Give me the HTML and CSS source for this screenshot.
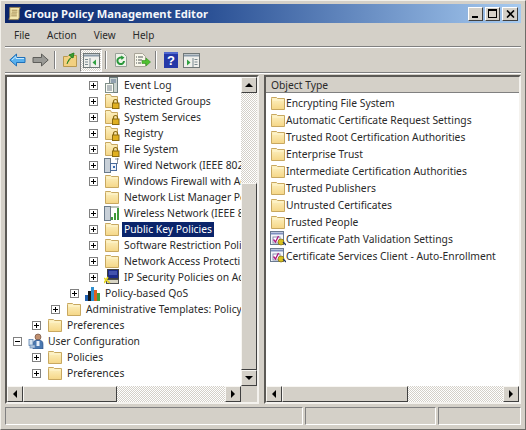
FILE: index.html
```html
<!DOCTYPE html>
<html lang="en">
<head>
<meta charset="utf-8">
<title>Group Policy Management Editor</title>
<link rel="stylesheet" href="styles.css">
</head>
<body>
<svg class="defs" width="0" height="0" aria-hidden="true">
  <defs>
    <linearGradient id="fg" x1="0" y1="0" x2="0" y2="1"><stop offset="0" stop-color="#fdf2c4"/><stop offset="1" stop-color="#f5d686"/></linearGradient>
    <symbol id="folder" viewBox="0 0 16 16">
      <path d="M1.5 3.5V2.5h5l1 1h7v11h-13z" fill="url(#fg)" stroke="#c8a860"/>
      <path d="M2.5 5h11" stroke="#fff6d0"/>
    </symbol>
    <symbol id="lockfolder" viewBox="0 0 16 16">
      <path d="M1.500 3.500V1.500h5l1 2h6v11h-12z" fill="url(#fg)" stroke="#c8a860"/>
      <path d="M9.500 10V8.500a2 2 0 0 1 4 0V10" fill="none" stroke="#8a6a10" stroke-width="1.200"/>
      <rect x="8.500" y="10" width="6.500" height="5.500" fill="#e0b020" stroke="#8a6a10"/>
    </symbol>
    <symbol id="log" viewBox="0 0 16 16">
      <rect x="5.5" y="0.5" width="8" height="15" fill="#c9d2cf" stroke="#6f7f80"/>
      <path d="M7 3h5M7 5h5" stroke="#5a7090"/>
      <rect x="1.5" y="6.5" width="8" height="9" fill="#fbfbf5" stroke="#7f8f88"/>
      <path d="M3 9h5M3 11h5M3 13h5" stroke="#70808a"/>
    </symbol>
    <symbol id="wired" viewBox="0 0 16 16">
      <rect x="0.5" y="1.5" width="6" height="14" fill="#c8d0d8" stroke="#6a7a8a"/>
      <rect x="6.5" y="6.5" width="6" height="7" fill="#eef2f8" stroke="#4a6a9a"/>
      <path d="M9 9h2v2H9z" fill="#3a6ab0"/>
      <path d="M13.5 1v6M11 2h4" stroke="#8a9098"/>
    </symbol>
    <symbol id="wireless" viewBox="0 0 16 16">
      <rect x="0.5" y="1.5" width="6" height="14" fill="#c8d0d8" stroke="#6a7a8a"/>
      <path d="M7 15h2v-3H7zM10 15h2V8h-2zM13 15h2V3h-2z" fill="#3f9a3a"/>
      <path d="M6 2h9" stroke="#7a8a7a"/>
    </symbol>
    <symbol id="ipsec" viewBox="0 0 16 16">
      <rect x="3.5" y="0.5" width="11" height="9" fill="#1c2a8a" stroke="#404040"/>
      <path d="M5 3h8M5 5h8" stroke="#6a7ad0"/>
      <rect x="2.5" y="10.5" width="12" height="4" fill="#d8d4c4" stroke="#505050"/>
      <path d="M0 9l6 5M0 14l4-6" stroke="#e8d820" stroke-width="1.6"/>
    </symbol>
    <symbol id="qos" viewBox="0 0 16 16">
      <rect x="0" y="10" width="3" height="6" fill="#2060b0"/>
      <rect x="3" y="6" width="3" height="10" fill="#181818"/>
      <rect x="6" y="2" width="3" height="14" fill="#3090d0"/>
      <rect x="9" y="5" width="3" height="11" fill="#e06020"/>
      <rect x="12" y="8" width="3" height="8" fill="#40a040"/>
    </symbol>
    <symbol id="user" viewBox="0 0 16 16">
      <circle cx="10" cy="4" r="3" fill="#c09070" stroke="#604030" stroke-width=".6"/>
      <path d="M5 16v-5c0-3 2-4 5-4s5 1 5 4v5z" fill="#4a78b0" stroke="#2a4a80" stroke-width=".6"/>
      <rect x="8.5" y="8" width="3" height="5" fill="#e8eef8"/>
      <rect x="1" y="6.5" width="4" height="6" fill="#d8e4f0" stroke="#5a80b0" stroke-width=".8"/>
      <rect x="2" y="12" width="5" height="3" fill="#b0c4dc" stroke="#5a80b0" stroke-width=".6"/>
    </symbol>
    <symbol id="cert" viewBox="0 0 16 16">
      <rect x="0.5" y="0.5" width="13" height="13" fill="#f4f6fa" stroke="#6a7a90"/>
      <path d="M1 2.500h12" stroke="#7f90c0" stroke-width="2"/>
      <rect x="3" y="6" width="7" height="6" fill="#fff" stroke="#8a90b0"/>
      <path d="M3.5 8.500l2 2.500 3-6" fill="none" stroke="#b01880" stroke-width="1.3"/>
      <circle cx="11" cy="11" r="3" fill="#d8c020" stroke="#806a10" stroke-width=".7"/>
      <path d="M13 11l3 3" stroke="#203060" stroke-width="1.3"/>
    </symbol>
  </defs>
</svg>

<div class="window">
  <header class="titlebar">
    <svg class="appicon" viewBox="0 0 16 16" width="15" height="15" aria-hidden="true">
      <path d="M3 1.500h11l-1 3v8l-1 2H2l1-3z" fill="#f4e8b0" stroke="#9a8450"/>
      <path d="M5 4.500h6M5 6.500h6M4.500 8.500h6M4.500 10.500h6" stroke="#a08850"/>
    </svg>
    <span class="title">Group Policy Management Editor</span>
    <div class="winbtns">
      <span class="winbtn"><i class="glyph-min"></i></span>
      <span class="winbtn"><i class="glyph-max"></i></span>
      <span class="winbtn winbtn-close">
        <svg viewBox="0 0 9 8" width="9" height="8" aria-hidden="true"><path d="M1 0.500l7 7M8 0.500l-7 7" stroke="#000" stroke-width="1.6"/></svg>
      </span>
    </div>
  </header>

  <nav class="menubar">
    <span class="menuitem">File</span>
    <span class="menuitem">Action</span>
    <span class="menuitem">View</span>
    <span class="menuitem">Help</span>
  </nav>

  <div class="toolbar">
    <span class="tool tool-first">
      <svg viewBox="0 0 17 14" width="17" height="14" aria-hidden="true"><path d="M0.800 7L7.500 1v3.500h8.500v5H7.500V13z" fill="#58b0ee" stroke="#2070b8"/><path d="M3 7l4-3.500v2h8" fill="none" stroke="#c4e8ff"/></svg>
    </span>
    <span class="tool">
      <svg viewBox="0 0 17 14" width="17" height="14" aria-hidden="true"><path d="M16.200 7L9.500 1v3.500H1v5h8.500V13z" fill="#9a9a96" stroke="#5e5e5a"/></svg>
    </span>
    <span class="toolsep"></span>
    <span class="tool">
      <svg viewBox="0 0 16 16" width="16" height="16" aria-hidden="true"><path d="M1.500 4.500h4l1-1h8v11h-13z" fill="#f2d080" stroke="#b89850"/><path d="M5 12c1-4 3-6 5-7M7 3l5-2-1 5z" fill="#3aa030" stroke="#2a8024"/></svg>
    </span>
    <span class="tool tool-pressed">
      <svg viewBox="0 0 17 15" width="17" height="15" aria-hidden="true"><rect x="0.500" y="0.500" width="16" height="14" fill="#f0f0ec" stroke="#707878"/><path d="M1 2.500h15" stroke="#8a9aa8" stroke-width="2"/><path d="M7 5v9M2 6.500h3M2 9h3M2 11.500h3" stroke="#7a8a90"/><path d="M13 6.500v6L9.500 9.500z" fill="#30a040"/></svg>
    </span>
    <span class="toolsep"></span>
    <span class="tool">
      <svg viewBox="0 0 16 16" width="16" height="16" aria-hidden="true"><path d="M2.500 1.500h8l3 3v10h-11z" fill="#eef2e8" stroke="#98a098"/><path d="M11 9a3.300 3.300 0 1 1-1.500-3" fill="none" stroke="#28983a" stroke-width="2"/><path d="M8 3.500l3.500 2-3 2.500z" fill="#28983a"/></svg>
    </span>
    <span class="tool">
      <svg viewBox="0 0 18 16" width="18" height="16" aria-hidden="true"><path d="M1.500 1.500h8l3 3v10h-11z" fill="#f8f6ea" stroke="#a8a498"/><path d="M3 5h1M5 5h5M3 8h1M5 8h4M3 11h1M5 11h3" stroke="#505858"/><path d="M9 8.500h4V6l4.500 4-4.500 4v-2.500H9z" fill="#50c030" stroke="#309020" stroke-width=".6"/></svg>
    </span>
    <span class="toolsep"></span>
    <span class="tool">
      <svg viewBox="0 0 14 16" width="14" height="16" aria-hidden="true"><rect width="14" height="16" fill="#2438a8"/><rect x="0" y="0" width="14" height="2" fill="#5068d0"/><text x="7" y="13" class="helpq">?</text></svg>
    </span>
    <span class="tool">
      <svg viewBox="0 0 17 15" width="17" height="15" aria-hidden="true"><rect x="0.500" y="0.500" width="16" height="14" fill="#f0f0ec" stroke="#707878"/><path d="M1 2.500h15" stroke="#8a9aa8" stroke-width="2"/><path d="M10 5v9M11.500 6.500h3M11.500 9h3M11.500 11.500h3" stroke="#7a8a90"/><path d="M4 6.500v6L7.500 9.500z" fill="#30a040"/></svg>
    </span>
  </div>

  <main class="panes">
    <section class="pane pane-tree">
      <div class="pane-body">
        <ul class="tree">
          <li class="row l3"><span class="exp"></span><svg class="ic"><use href="#log"/></svg><span class="lbl">Event Log</span></li>
          <li class="row l3"><span class="exp"></span><svg class="ic"><use href="#lockfolder"/></svg><span class="lbl">Restricted Groups</span></li>
          <li class="row l3"><span class="exp"></span><svg class="ic"><use href="#lockfolder"/></svg><span class="lbl">System Services</span></li>
          <li class="row l3"><span class="exp"></span><svg class="ic"><use href="#lockfolder"/></svg><span class="lbl">Registry</span></li>
          <li class="row l3"><span class="exp"></span><svg class="ic"><use href="#lockfolder"/></svg><span class="lbl">File System</span></li>
          <li class="row l3"><span class="exp"></span><svg class="ic"><use href="#wired"/></svg><span class="lbl">Wired Network (IEEE 802</span></li>
          <li class="row l3"><span class="exp"></span><svg class="ic"><use href="#folder"/></svg><span class="lbl">Windows Firewall with Ad</span></li>
          <li class="row l3"><span class="exp exp-none"></span><svg class="ic"><use href="#folder"/></svg><span class="lbl">Network List Manager Po</span></li>
          <li class="row l3"><span class="exp"></span><svg class="ic"><use href="#wireless"/></svg><span class="lbl">Wireless Network (IEEE 8</span></li>
          <li class="row l3"><span class="exp"></span><svg class="ic"><use href="#folder"/></svg><span class="lbl lbl-sel">Public Key Policies</span></li>
          <li class="row l3"><span class="exp"></span><svg class="ic"><use href="#folder"/></svg><span class="lbl">Software Restriction Poli</span></li>
          <li class="row l3"><span class="exp"></span><svg class="ic"><use href="#folder"/></svg><span class="lbl">Network Access Protecti</span></li>
          <li class="row l3"><span class="exp"></span><svg class="ic"><use href="#ipsec"/></svg><span class="lbl">IP Security Policies on Ac</span></li>
          <li class="row l2"><span class="exp"></span><svg class="ic"><use href="#qos"/></svg><span class="lbl">Policy-based QoS</span></li>
          <li class="row l1"><span class="exp"></span><svg class="ic"><use href="#folder"/></svg><span class="lbl">Administrative Templates: Policy</span></li>
          <li class="row l0b"><span class="exp"></span><svg class="ic"><use href="#folder"/></svg><span class="lbl">Preferences</span></li>
          <li class="row l0"><span class="exp exp-open"></span><svg class="ic"><use href="#user"/></svg><span class="lbl">User Configuration</span></li>
          <li class="row l0b"><span class="exp"></span><svg class="ic"><use href="#folder"/></svg><span class="lbl">Policies</span></li>
          <li class="row l0b"><span class="exp"></span><svg class="ic"><use href="#folder"/></svg><span class="lbl">Preferences</span></li>
        </ul>
        <div class="vscroll">
          <span class="sbtn"><i class="arr arr-up"></i></span>
          <span class="strack strack-a"></span>
          <span class="sthumb sthumb-v"></span>
          <span class="sbtn"><i class="arr arr-down"></i></span>
        </div>
      </div>
      <div class="hscroll">
        <span class="sbtn"><i class="arr arr-left"></i></span>
        <span class="sthumb sthumb-h1"></span>
        <span class="strack"></span>
        <span class="sbtn"><i class="arr arr-right"></i></span>
        <span class="corner"></span>
      </div>
    </section>

    <section class="pane pane-list">
      <div class="listhead">Object Type</div>
      <ul class="list">
        <li class="item"><svg class="ic"><use href="#folder"/></svg><span>Encrypting File System</span></li>
        <li class="item"><svg class="ic"><use href="#folder"/></svg><span>Automatic Certificate Request Settings</span></li>
        <li class="item"><svg class="ic"><use href="#folder"/></svg><span>Trusted Root Certification Authorities</span></li>
        <li class="item"><svg class="ic"><use href="#folder"/></svg><span>Enterprise Trust</span></li>
        <li class="item"><svg class="ic"><use href="#folder"/></svg><span>Intermediate Certification Authorities</span></li>
        <li class="item"><svg class="ic"><use href="#folder"/></svg><span>Trusted Publishers</span></li>
        <li class="item"><svg class="ic"><use href="#folder"/></svg><span>Untrusted Certificates</span></li>
        <li class="item"><svg class="ic"><use href="#folder"/></svg><span>Trusted People</span></li>
        <li class="item"><svg class="ic"><use href="#cert"/></svg><span>Certificate Path Validation Settings</span></li>
        <li class="item"><svg class="ic"><use href="#cert"/></svg><span>Certificate Services Client - Auto-Enrollment</span></li>
      </ul>
      <div class="hscroll">
        <span class="sbtn"><i class="arr arr-left"></i></span>
        <span class="sthumb sthumb-h2"></span>
        <span class="strack"></span>
        <span class="sbtn"><i class="arr arr-right"></i></span>
      </div>
    </section>
  </main>

  <footer class="statusbar">
    <span class="cell cell-a"></span>
    <span class="cell cell-b"></span>
    <span class="cell cell-c"></span>
  </footer>
</div>
</body>
</html>
```

FILE: styles.css
```css
* { box-sizing: border-box; }
html, body { margin: 0; padding: 0; }
body {
  width: 526px;
  height: 430px;
  overflow: hidden;
  background: #d4d0c8;
  font-family: "Noto Sans", "DejaVu Sans", sans-serif;
  font-size: 10.3px;
  color: #2a2a2a;
}
.defs { position: absolute; }
ul { list-style: none; margin: 0; padding: 0; }

.window {
  width: 526px;
  height: 430px;
  padding: 3px 4px 4px;
  display: flex;
  flex-direction: column;
  border-top: 1px solid #f2f0ea;
  border-left: 1px solid #f2f0ea;
  border-right: 1px solid #6e6c68;
  border-bottom: 1px solid #6e6c68;
}

.titlebar {
  height: 19px;
  flex: none;
  display: flex;
  align-items: center;
  padding: 0 3px 0 2px;
  background: linear-gradient(90deg, #0a246a 0%, #2c5296 40%, #a6caf0 100%);
  color: #fff;
}
.appicon { flex: none; margin-right: 2px; }
.title { font-weight: 700; font-size: 11.2px; white-space: nowrap; color: #f4f6fa; }
.winbtns { margin-left: auto; display: flex; gap: 2px; }
.winbtn {
  width: 15px;
  height: 14px;
  background: #d4d0c8;
  border: 1px solid;
  border-color: #fff #404040 #404040 #fff;
  display: flex;
  align-items: center;
  justify-content: center;
  position: relative;
}
.winbtn-close { width: 16px; }
.glyph-min { display: block; width: 6px; height: 2px; background: #000; margin-top: 7px; margin-right: 2px; }
.glyph-max { display: block; width: 9px; height: 9px; border: 1px solid #000; border-top-width: 2px; }

.menubar {
  height: 24px;
  flex: none;
  display: flex;
  align-items: center;
  padding-left: 9px;
  gap: 17px;
  border-bottom: 1px solid #808080;
  box-shadow: 0 1px 0 #fff;
  font-size: 10px;
}
.toolbar {
  height: 25px;
  flex: none;
  margin-top: 1px;
  display: flex;
  align-items: center;
  border-bottom: 1px solid #808080;
  box-shadow: 0 1px 0 #fff;
}
.tool {
  width: 21px;
  height: 23px;
  display: flex;
  align-items: center;
  justify-content: center;
  flex: none;
}
.tool-first { margin-left: 2px; margin-right: 2px; }
.tool-pressed {
  width: 22px;
  background: repeating-conic-gradient(#fff 0 25%, #d4d0c8 0 50%) 0 0 / 2px 2px;
  border: 1px solid;
  border-color: #808080 #fff #fff #808080;
}
.toolsep {
  width: 2px;
  height: 18px;
  margin: 0 3px;
  flex: none;
  border-left: 1px solid #808080;
  border-right: 1px solid #fff;
}
.helpq { font: 700 13px "Liberation Sans", sans-serif; fill: #fff; text-anchor: middle; }

.panes {
  flex: 1;
  min-height: 0;
  margin-top: 2px;
  display: flex;
  gap: 5px;
  padding: 0 0 3px 0;
}
.pane {
  display: flex;
  flex-direction: column;
  background: #fff;
  border: 2px solid;
  border-color: #5c5a56 #f4f2ee #f4f2ee #5c5a56;
  overflow: hidden;
}
.pane-tree { width: 254px; flex: none; }
.pane-list { flex: 1; min-width: 0; }
.pane-body { flex: 1; min-height: 0; display: flex; overflow: hidden; }

.tree { flex: 1; min-width: 0; overflow: hidden; }
.row { height: 16px; display: flex; align-items: center; white-space: nowrap; }
.l3 { padding-left: 82px; }
.l2 { padding-left: 63px; }
.l1 { padding-left: 44px; }
.l0b { padding-left: 25px; }
.l0 { padding-left: 6px; }
.exp {
  width: 9px;
  height: 9px;
  flex: none;
  margin-right: 6px;
  border: 1px solid #808080;
  background:
    linear-gradient(#000, #000) center / 5px 1px no-repeat,
    linear-gradient(#000, #000) center / 1px 5px no-repeat,
    #fff;
}
.exp-open { background: linear-gradient(#000, #000) center / 5px 1px no-repeat, #fff; }
.exp-none { visibility: hidden; }
.ic { width: 16px; height: 16px; flex: none; }
.lbl { margin-left: 2px; padding: 0 2px; line-height: 15px; min-width: 0; overflow: hidden; }
.lbl-sel { background: #0a246a; color: #fff; }

.vscroll {
  width: 16px;
  flex: none;
  display: flex;
  flex-direction: column;
  background: #d4d0c8;
}
.sbtn {
  flex: none;
  width: 16px;
  height: 16px;
  background: #d4d0c8;
  border: 1px solid;
  border-color: #f8f6f2 #404040 #404040 #f8f6f2;
  display: flex;
  align-items: center;
  justify-content: center;
}
.strack {
  flex: 1;
  background: repeating-conic-gradient(#fff 0 25%, #d4d0c8 0 50%) 0 0 / 2px 2px;
}
.sthumb {
  flex: none;
  background: #d4d0c8;
  border: 1px solid;
  border-color: #f8f6f2 #404040 #404040 #f8f6f2;
}
.sthumb-v { height: 187px; }
.sthumb-h1 { width: 94px; }
.sthumb-h2 { width: 126px; }
.arr { display: block; width: 0; height: 0; border: solid transparent; }
.arr-up { border-width: 0 4px 4px; border-bottom-color: #000; }
.arr-down { border-width: 4px 4px 0; border-top-color: #000; }
.arr-left { border-width: 4px 4px 4px 0; border-right-color: #000; }
.arr-right { border-width: 4px 0 4px 4px; border-left-color: #000; }
.hscroll { height: 16px; flex: none; display: flex; background: #d4d0c8; }
.corner { width: 16px; flex: none; background: #d4d0c8; }

.listhead {
  height: 16px;
  flex: none;
  padding-left: 5px;
  background: #d4d0c8;
  border-bottom: 1px solid #808080;
  line-height: 17px;
}
.list { flex: 1; min-height: 0; padding: 1px 0 0 4px; overflow: hidden; }
.item { height: 17px; display: flex; align-items: center; white-space: nowrap; }

.statusbar {
  height: 18px;
  flex: none;
  display: flex;
  gap: 2px;
}
.cell {
  display: block;
  border: 1px solid;
  border-color: #808080 #fff #fff #808080;
}
.cell-a { width: 298px; }
.cell-b { width: 131px; }
.cell-c { flex: 1; }
```
